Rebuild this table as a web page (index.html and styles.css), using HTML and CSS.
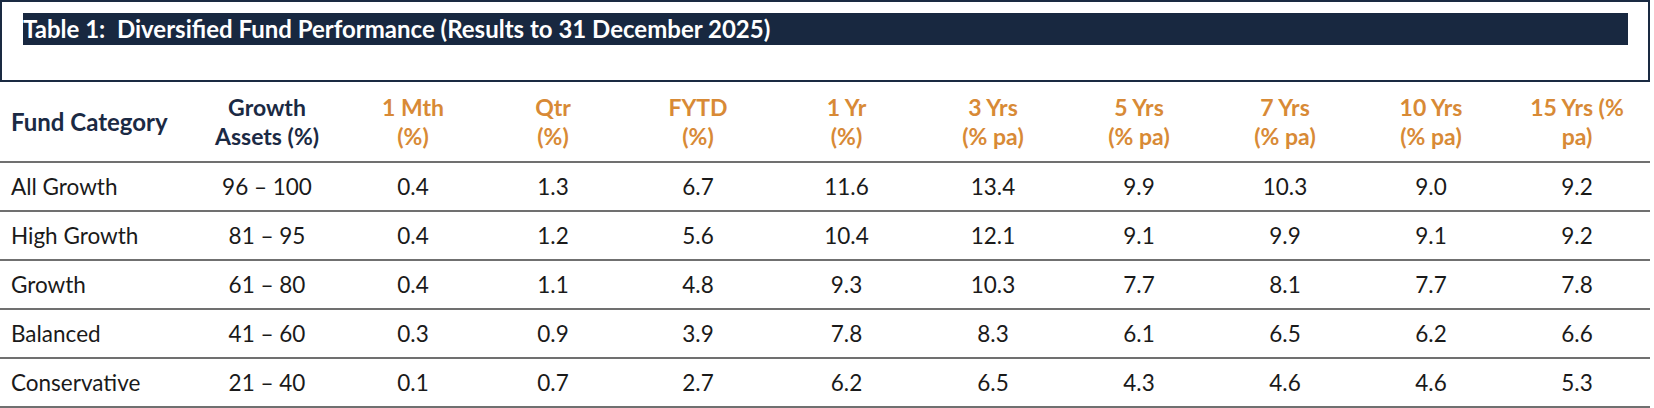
FILE: index.html
```html
<!DOCTYPE html>
<html lang="en">
<head>
<meta charset="utf-8">
<title>Diversified Fund Performance</title>
<link rel="stylesheet" href="styles.css">
</head>
<body>
<div class="page">
  <div class="caption-box">
    <div class="caption-bar">Table 1:&nbsp; Diversified Fund Performance (Results to 31 December 2025)</div>
  </div>
  <table class="perf">
    <colgroup>
      <col class="c-cat"><col class="c-growth"><col class="c-n1"><col class="c-n2"><col class="c-n3"><col class="c-n4"><col class="c-n"><col class="c-n"><col class="c-n"><col class="c-n"><col class="c-n">
    </colgroup>
    <thead>
      <tr>
        <th class="cat navy">Fund Category</th>
        <th class="navy">Growth<br>Assets (%)</th>
        <th class="orange">1 Mth<br>(%)</th>
        <th class="orange">Qtr<br>(%)</th>
        <th class="orange">FYTD<br>(%)</th>
        <th class="orange">1 Yr<br>(%)</th>
        <th class="orange">3 Yrs<br>(% pa)</th>
        <th class="orange">5 Yrs<br>(% pa)</th>
        <th class="orange">7 Yrs<br>(% pa)</th>
        <th class="orange">10 Yrs<br>(% pa)</th>
        <th class="orange">15 Yrs (%<br>pa)</th>
      </tr>
    </thead>
    <tbody>
      <tr><td class="cat">All Growth</td><td>96 – 100</td><td>0.4</td><td>1.3</td><td>6.7</td><td>11.6</td><td>13.4</td><td>9.9</td><td>10.3</td><td>9.0</td><td>9.2</td></tr>
      <tr><td class="cat">High Growth</td><td>81 – 95</td><td>0.4</td><td>1.2</td><td>5.6</td><td>10.4</td><td>12.1</td><td>9.1</td><td>9.9</td><td>9.1</td><td>9.2</td></tr>
      <tr><td class="cat">Growth</td><td>61 – 80</td><td>0.4</td><td>1.1</td><td>4.8</td><td>9.3</td><td>10.3</td><td>7.7</td><td>8.1</td><td>7.7</td><td>7.8</td></tr>
      <tr><td class="cat">Balanced</td><td>41 – 60</td><td>0.3</td><td>0.9</td><td>3.9</td><td>7.8</td><td>8.3</td><td>6.1</td><td>6.5</td><td>6.2</td><td>6.6</td></tr>
      <tr><td class="cat">Conservative</td><td>21 – 40</td><td>0.1</td><td>0.7</td><td>2.7</td><td>6.2</td><td>6.5</td><td>4.3</td><td>4.6</td><td>4.6</td><td>5.3</td></tr>
    </tbody>
  </table>
</div>
</body>
</html>
```

FILE: styles.css
```css
* { box-sizing: border-box; }
html, body { margin: 0; padding: 0; background: #ffffff; }
body { font-family: Lato, "Open Sans", "DejaVu Sans", sans-serif; color: #1e1e1e; }
.page { width: 1654px; height: 408px; overflow: hidden; }

.caption-box {
  width: 1650px;
  height: 82px;
  border: 2px solid #1a2a42;
  padding: 11px 20px 0 21px;
}
.caption-bar {
  height: 32px;
  background: #182840;
  color: #ffffff;
  font-weight: 700;
  font-size: 24px;
  line-height: 32px;
  white-space: nowrap;
}

.perf {
  width: 1650px;
  border-collapse: collapse;
  table-layout: fixed;
}
.c-cat { width: 191px; }
.c-growth { width: 152px; }
.c-n1 { width: 140px; }
.c-n2 { width: 140px; }
.c-n3 { width: 150px; }
.c-n4 { width: 147px; }
.c-n { width: 146px; }

.perf th {
  height: 80px;
  font-size: 23px;
  line-height: 29px;
  font-weight: 700;
  text-align: center;
  vertical-align: middle;
  padding: 0;
  border-bottom: 2px solid #707070;
}
.perf th.cat { font-size: 24px; }
.perf td {
  height: 49px;
  font-size: 22.5px;
  text-align: center;
  vertical-align: middle;
  padding: 0;
  border-bottom: 2px solid #707070;
  color: #1a1a1a;
}
.perf .cat { text-align: left; padding-left: 11px; }
.navy { color: #1b2a44; }
.orange { color: #d88a36; }
```
